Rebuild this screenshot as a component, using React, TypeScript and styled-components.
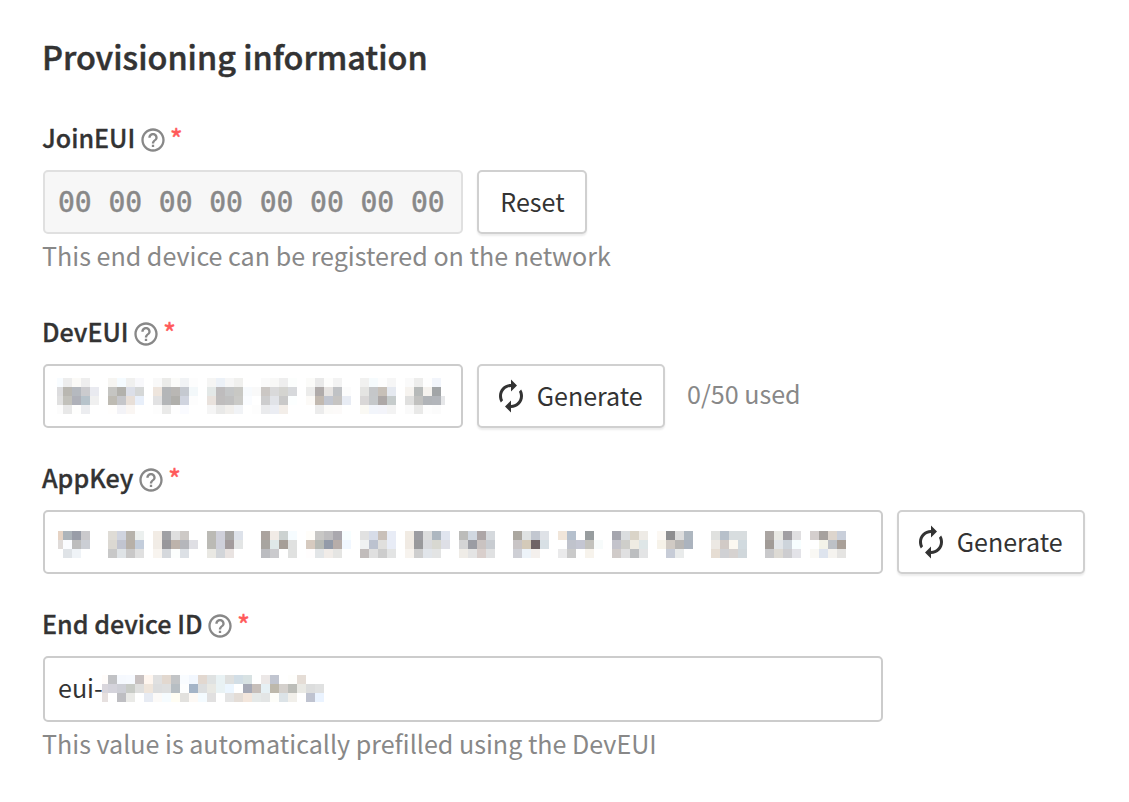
import React from 'react';
import styled, { createGlobalStyle } from 'styled-components';

const GlobalStyle = createGlobalStyle`
  body { margin: 0; background: #fff; }
  * { box-sizing: border-box; }
`;

const sans = `"Source Sans Pro", "Noto Sans CJK SC", sans-serif`;

const Page = styled.main`
  width: 1129px;
  height: 802px;
  padding: 32px 43px 0;
  font-family: ${sans};
  font-size: 25.08px;
  color: #333;
  white-space: nowrap;
  overflow: hidden;
`;

const Title = styled.h1`
  margin: 0 0 39px -1px;
  height: 48px;
  font-size: 32.4px;
  line-height: 48px;
  font-weight: 500;
  -webkit-text-stroke: 0.5px #333;
`;

const Field = styled.section`
  margin-bottom: 31px;
`;

const Label = styled.div`
  display: flex;
  align-items: center;
  height: 36px;
  margin: 0 0 15px -1px;
  line-height: 36px;
  font-weight: 500;
  -webkit-text-stroke: 0.3px #333;
`;

const HelpSvg = styled.svg`
  width: 28px;
  height: 28px;
  margin: 5px 0 0 3.5px;
  fill: #888;
`;

const Required = styled.span`
  margin: 2px 0 0 3px;
  color: #ff5a5a;
  font-size: 28px;
  font-weight: 400;
  -webkit-text-stroke: 0.4px #ff5a5a;
`;

const Row = styled.div`
  display: flex;
  align-items: center;
  gap: 14px;
`;

const Input = styled.div<{ $wide?: boolean; $disabled?: boolean; $tall?: boolean }>`
  display: flex;
  align-items: center;
  width: ${p => (p.$wide ? 840 : 420)}px;
  height: ${p => (p.$tall ? 66 : 64)}px;
  padding-left: ${p => (p.$tall ? 13 : 12)}px;
  border: 2px solid ${p => (p.$disabled ? '#e0e0e0' : '#ccc')};
  border-radius: 5px;
  background: ${p => (p.$disabled ? '#f7f7f7' : '#fff')};
`;

const Bytes = styled.span`
  margin: 2px 0 0 1px;
  font-family: "DejaVu Sans Mono", monospace;
  font-size: 28px;
  line-height: 58px;
  letter-spacing: -0.05px;
  -webkit-text-stroke: 0.5px #888;
  color: #888;
  white-space: pre;
`;

const Prefix = styled.span`
  height: 60px;
  line-height: 56px;
`;

const Button = styled.button`
  display: flex;
  align-items: center;
  justify-content: center;
  width: 188px;
  height: 64px;
  padding: 0 6px 0 0;
  gap: 8px;
  border: 2px solid #d0d0d0;
  border-radius: 5px;
  background: #fff;
  box-shadow: 0 2px 2px rgba(0, 0, 0, 0.08);
  color: #333;
  font: 400 25.06px ${sans};
  line-height: 56px;
`;

const ResetButton = styled(Button)`
  width: 110px;
  padding: 0 0 2px 1px;
`;

const GenerateSvg = styled.svg`
  width: 36px;
  height: 36px;
  fill: #333;
`;

const ButtonText = styled.span`
  margin: -3px 0 0 -0.5px;
`;

const Used = styled.span`
  margin-left: 8px;
  margin-top: -6px;
  color: #888;
`;

const Hint = styled.div`
  height: 48px;
  margin-left: -1px;
  line-height: 42px;
  color: #888;
`;

const Help = () => (
  <HelpSvg viewBox="0 0 24 24">
    <path d="M11 18h2v-2h-2v2zm1-16C6.48 2 2 6.48 2 12s4.48 10 10 10 10-4.48 10-10S17.52 2 12 2zm0 18c-4.41 0-8-3.59-8-8s3.59-8 8-8 8 3.59 8 8-3.59 8-8 8zm0-14c-2.21 0-4 1.79-4 4h2c0-1.1.9-2 2-2s2 .9 2 2c0 2-3 1.75-3 5h2c0-2.25 3-2.5 3-5 0-2.21-1.79-4-4-4z" />
  </HelpSvg>
);

const Generate = () => (
  <Button>
    <GenerateSvg viewBox="0 0 24 24">
      <path d="M12 6v3l4-4-4-4v3c-4.42 0-8 3.58-8 8 0 1.57.46 3.03 1.24 4.26L6.7 14.8c-.45-.83-.7-1.79-.7-2.8 0-3.31 2.69-6 6-6zm6.76 1.74L17.3 9.2c.44.84.7 1.79.7 2.8 0 3.31-2.69 6-6 6v-3l-4 4 4 4v-3c4.42 0 8-3.58 8-8 0-1.57-.46-3.03-1.24-4.26z" />
    </GenerateSvg>
    <ButtonText>Generate</ButtonText>
  </Button>
);

const CELL = 9;

// Each block is a column offset plus its rows of cell colours; "-" is an empty cell.
type Block = [number, string[]];

const devEui: Block[] = [
  [0, ['f8fcff ededed fbfaf7 eeeeee -', 'dcdcde b9b7b1 b5b9bf cbcbce e9eaf0', 'e0e0e0 c2c1bb afb1b9 b7c3cb f0f0f0', 'fcfcfc e8e8e8 fefefd ecedf0 -']],
  [6, ['f6f5f2 f5fbff f0f0ef f8f8fb', 'c5c5c2 b2b1ac dcdfe8 d5d7d7', 'bebbb3 c5c6ca e8dfd8 e8effa', 'fffefd f3f3f7 faf6f3 -']],
  [11, ['f9f9f9 ebebe9 fbfbf9 f1f3f5 fdfdfd', 'eee5dd b4b6b8 b9b7b4 c5c9d0 f3f8fa', 'e2e2e3 b4b6b8 b0afab d0d4df fdfdfd', 'fdfdfd eaeae9 fefefe fafbff -']],
  [17, ['f5f5f4 ecf1f7 f6f6f6 f0f0ee - -', 'e3e8e7 bebcbd c4c6c7 c8c8c4 f7fafd fafafc', 'e9e2dd bfbdbd c0c0c0 cacac7 fafcff -', 'f5f5f5 e9e9e8 f1efec f1f3f6 - fdfdfd']],
  [22, ['- fafafa f8f8f7 eeeeee fcfefd', 'f9f9f9 cbc7c4 d9d9da d4d4d0 d7d9dc', '- cdcdce e1e3e8 c9c9c9 fcffff', 'fdfdfd eaebed ebedf3 f3eee9 -']],
  [28, ['fbfbf9 e9e9e9 fdfdfc f3f3f3 -', 'ececeb b0abaa e6e3e1 c0c2c5 fcfcfc', 'fcfaf7 c2b9b0 c2c6d0 c6c4c2 e8ecf4', '- ececec fbfaf8 fcfaf9 -']],
  [34, ['f1f1f0 f6fbfd fdfdfd f6f6f6', 'e4e4e2 c5c7c9 c7c0b8 e5e9f0', 'd9d7d7 c5c8ca ada8a7 c6cccc', 'faf9f4 f2f5fb f3f4fa f3f3f3']],
  [39, ['fafafa ededec fefefe f2f5fb', 'f6f3ef b7bab9 f5f2ee a2a5a7', 'e0e0df c1c1bf b1b4b8 b2b5ba e6e7e9', 'fafafa e9e9e8 fdfdfd fbfbfb']],
];

const appKey: Block[] = [
  [0, ['e6d3c4 adb4ba 999da8 cac9cc', 'dfdbd9 fafcff bdbdbd cbced4', '- dfe3e7 eff3f7 -']],
  [6, ['dfdcd6 d0d4df b7b3ac ecf0ef', 'dbd8d2 c1c4d0 b7b0a8 c3cddb', 'c8c8c8 dfe3e6 c9c8c8 e0e0e0']],
  [11, ['f2ece5 a0a1a5 dfdfdf cdc9c6 -', 'f1ece6 98979b bdb3ab b5b6bb dfdfe4', 'f8f4ef d5d8dc fcfefd dce0e5 -']],
  [17, ['bbbab5 cfd0da a8a7a6 dde2ea', 'bbbab5 cfd0da a39b9c e3e5e5', 'e9e8e3 d2d5d9 e9e3e1 -']],
  [23, ['aba39e f1ebe6 ccd2d1 f6fcff', 'a8a5a0 dfe8e8 a69e97 e0e1e0', 'bbbcc0 cacacd - e0e1e0']],
  [28, ['fffdf9 c8c7c5 bebdbf aaa8ae f7feff', 'd6cabf b7bab5 939ba9 b7ada9 f1f7ff', 'fffdfd e2e5e7 f1ece8 e5e5e3 -']],
  [34, ['e1e1e1 d7dce8 c9c0b9 e8ecf6', 'f0f2f2 bcc2cf e0dfdd e8ecf6', 'c1bcbb e0e0e0 cdcdcd e3e4e4']],
  [39, ['f1ebe3 9d9da2 dcdddd adb7c0 e0e5ef', 'f0eae3 99999b d9dadd d8d8d1 dedfe6', 'f7f3ee cecece e1e5ea e3e4e4 -']],
  [45, ['bcbcba d1d8e1 ada6a7 d5d9dd', 'd4d4d5 9b9ca3 cac3c1 c8ccd1', 'efece7 e4e4e4 d9cfcc e0e1e2']],
  [51, ['aba7a0 dfe2e2 c2c7d0 dfe2e7', 'c8c4c5 d4cab9 706466 d8e0e5', 'cecfd5 edf3f9 f4f0ed -']],
  [56, ['f1e6da b5c0cd - 989d9f -', '- c0c3cc c4c6d2 c3c2bd f7fbfb', 'eaeaeb cacaca - f7f3ec -']],
  [62, ['a5a6ae dadddf dad4c8 eeebe6', 'c3c3cb cececa efece3 dee6e7', 'd0cbc9 e0e0e1 bcbec0 e3e4e5']],
  [67, ['fcf8f3 8e8e90 dddddd aeb7c0', 'f6f2e9 d0cac4 b8b6b4 abb3be', '- c7ccd7 e9ebeb -']],
  [73, ['e0e1df b7c0ca d8dddf d8dddf', 'ece8e3 d1cac6 fbf8f1 d1dadf', 'e6ddd3 d0d1d4 d6d2d0 d0d7db']],
  [79, ['aaa5a2 e9e9e4 a19fa3 e0dfe1', 'a19b97 e2e5e8 cdd4db f7feff', 'c9c9cb dddad4 cdcdd0 e3e3e8']],
  [84, ['d4cecd a6a19e ddd5cd c9cfda', '- f3f3e9 bdc1c6 a9a098', 'f9f8f4 dee4ee f5f3ef e5e4e2']],
];

const deviceId: Block[] = [
  [0, [
    'fffcfa c1c2c5 f6f9fe f7faff c7c0c0 fff6ef e0e0e0 e2d8cf c2c4c6 f9fcff f2f7fe e2d8d0 dfe2e2 e9f2f4 dfe0df d2dee6 d8e2e3 - ece8e7 c1c5d0 - fefefc e5ddd6 - -',
    'd9d6dc d4d3db cecfd6 c8cbc6 dfdfde efe5db dcddde dedfdf b7bec3 fdfefe a4b4c7 dcdedf e8e8e3 e9f2f4 ecf6ff - a6a9b6 c7bfba e6f0f4 bdb8ab d4d0cc bcbdb8 e9e9e4 dcdddd e0e1e1',
    'e6e0df - bebec2 eaeae7 - e7ebf3 fcfaf8 f6fcff fffdf3 e2e1de fdf9f5 f4fbff e1e0e0 - e4e4e4 e4ddd7 f3e6dc e5e9e8 e3e5e5 fdfdf9 dce3e7 f1efea - bfc3d0 eaf3ff',
  ]],
];

const MosaicSvg = styled.svg<{ $shiftX?: number; $shiftY?: number }>`
  display: block;
  flex: none;
  margin: ${p => p.$shiftY ?? 0}px 0 0 ${p => p.$shiftX ?? 0}px;
`;

interface MosaicProps {
  blocks: Block[];
  width: number;
  rows: number;
  /* How much of the first column is hidden by the left edge. */
  cut: number;
  shiftX?: number;
  shiftY?: number;
}

const Mosaic = ({ blocks, width, rows, cut, shiftX, shiftY }: MosaicProps) => (
  <MosaicSvg
    $shiftX={shiftX}
    $shiftY={shiftY}
    width={width}
    height={rows * CELL}
    viewBox={`${cut} 0 ${width} ${rows * CELL}`}
    shapeRendering="crispEdges"
  >
    {blocks.map(([start, lines]) =>
      lines.map((line, y) =>
        line.split(' ').map((c, x) =>
          c === '-' ? null : (
            <rect key={`${start}-${y}-${x}`} x={(start + x) * CELL} y={y * CELL} width={CELL} height={CELL} fill={`#${c}`} />
          ),
        ),
      ),
    )}
  </MosaicSvg>
);

const FieldLabel = ({ children }: { children: React.ReactNode }) => (
  <Label>
    <span>{children}</span>
    <Help />
    <Required>*</Required>
  </Label>
);

export default function App() {
  return (
    <Page>
      <GlobalStyle />
      <Title>Provisioning information</Title>
      <Field>
        <FieldLabel>JoinEUI</FieldLabel>
        <Row>
          <Input $disabled>
            <Bytes>00 00 00 00 00 00 00 00</Bytes>
          </Input>
          <ResetButton>Reset</ResetButton>
        </Row>
        <Hint>This end device can be registered on the network</Hint>
      </Field>
      <Field>
        <FieldLabel>DevEUI</FieldLabel>
        <Row>
          <Input>
            <Mosaic blocks={devEui} width={388} rows={4} cut={3} />
          </Input>
          <Generate />
          <Used>0/50 used</Used>
        </Row>
      </Field>
      <Field>
        <FieldLabel>AppKey</FieldLabel>
        <Row>
          <Input $wide>
            <Mosaic blocks={appKey} width={788} rows={3} cut={4} shiftX={1} shiftY={4} />
          </Input>
          <Generate />
        </Row>
      </Field>
      <Field>
        <FieldLabel>End device ID</FieldLabel>
        <Input $wide $tall>
          <Prefix>eui-</Prefix>
          <Mosaic blocks={deviceId} width={222} rows={3} cut={3} shiftX={-1} shiftY={-1} />
        </Input>
        <Hint>This value is automatically prefilled using the DevEUI</Hint>
      </Field>
    </Page>
  );
}
